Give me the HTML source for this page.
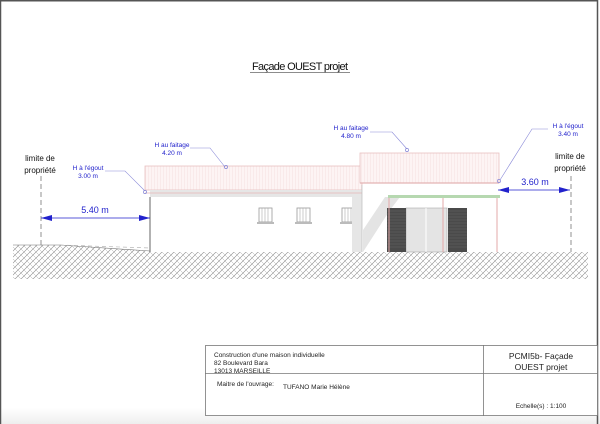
<!DOCTYPE html>
<html><head><meta charset="utf-8"><style>
html,body{margin:0;padding:0;background:#fff}
svg{display:block}
text{font-family:"Liberation Sans",sans-serif}
</style></head><body>
<svg width="600" height="424" viewBox="0 0 600 424" xmlns="http://www.w3.org/2000/svg">
<defs>
<pattern id="h" width="6" height="6" patternUnits="userSpaceOnUse">
<rect width="6" height="6" fill="#fff"/>
<path d="M0 6L6 0M-1 1L1 -1M5 7L7 5" stroke="#888" stroke-width="0.6"/>
<path d="M0 0L6 6M-1 5L1 7M5 -1L7 1" stroke="#aaa" stroke-width="0.5"/>
</pattern>
<pattern id="r" width="3" height="10" patternUnits="userSpaceOnUse">
<rect width="3" height="10" fill="#fdf4f4"/>
<path d="M1.5 0V10" stroke="#f6e0e0" stroke-width="0.5"/>
</pattern>
<linearGradient id="bg" x1="0" y1="0" x2="0" y2="1"><stop offset="0" stop-color="#fff"/><stop offset="1" stop-color="#eee"/></linearGradient>
</defs>
<rect x="0" y="408" width="600" height="16" fill="url(#bg)"/>
<path d="M0.5 424V0.8H597.5V424" fill="none" stroke="#555" stroke-width="1.5"/>

<text x="300" y="70" font-size="11" text-anchor="middle" fill="#111" textLength="96">Façade OUEST projet</text>
<line x1="250" y1="72.5" x2="350" y2="72.5" stroke="#666" stroke-width="0.7"/>

<!-- ground -->
<path d="M13 245H60L150 251L362 252H588V279H13Z" fill="url(#h)"/>
<path d="M13 245H60L150 251" fill="none" stroke="#777" stroke-width="0.6"/>
<path d="M60 245L150 248L362 250" fill="none" stroke="#aaa" stroke-width="0.6" stroke-dasharray="4 3"/>

<!-- left building -->
<rect x="150" y="193" width="212" height="59" fill="#fff"/>
<line x1="150" y1="197" x2="150" y2="252" stroke="#666" stroke-width="1"/>
<rect x="145" y="166" width="217" height="24" fill="url(#r)" stroke="#e8c0c0" stroke-width="0.8"/>
<rect x="150" y="190" width="212" height="7" fill="#e6e6e6"/>
<line x1="145" y1="193" x2="362" y2="193" stroke="#e4b4b4" stroke-width="0.7"/>
<g fill="#fff" stroke="#999" stroke-width="0.8">
<rect x="259" y="208" width="13" height="14"/><rect x="297" y="208" width="13" height="14"/><rect x="342" y="208" width="13" height="14"/>
</g>
<g stroke="#aaa" stroke-width="0.6">
<path d="M262 208V222M265 208V222M268 208V222M300 208V222M303 208V222M306 208V222M345 208V222M348 208V222M351 208V222"/>
</g>
<rect x="257" y="222" width="17" height="2" fill="#bbb"/><rect x="295" y="222" width="17" height="2" fill="#bbb"/><rect x="340" y="222" width="17" height="2" fill="#bbb"/>
<rect x="352" y="197" width="10" height="55" fill="#e6e6e6"/>

<!-- right building -->
<rect x="362" y="185" width="137" height="67" fill="#fff"/>
<polygon points="363,252 390,210 400,197 385,197 363,230" fill="#e4e4e4"/>
<rect x="360" y="153" width="139" height="30" fill="url(#r)" stroke="#e8c0c0" stroke-width="0.8"/>
<line x1="360" y1="183" x2="499" y2="183" stroke="#e4b4b4" stroke-width="1.2"/>
<line x1="362" y1="185" x2="362" y2="252" stroke="#bbb" stroke-width="0.7"/>
<rect x="388" y="195" width="112" height="3" fill="#b6d8b0"/>
<rect x="406" y="208" width="41" height="44" fill="#e4e4e4" stroke="#999" stroke-width="0.5"/>
<line x1="426" y1="208" x2="426" y2="252" stroke="#fff" stroke-width="1"/>
<rect x="387" y="208" width="19" height="44" fill="#4a4a4a"/>
<rect x="448" y="208" width="19" height="44" fill="#4a4a4a"/>
<g stroke="#666" stroke-width="0.5"><path d="M387 211H406M387 214H406M387 217H406M387 220H406M387 223H406M387 226H406M387 229H406M387 232H406M387 235H406M387 238H406M387 241H406M387 244H406M387 247H406M448 211H467M448 214H467M448 217H467M448 220H467M448 223H467M448 226H467M448 229H467M448 232H467M448 235H467M448 238H467M448 241H467M448 244H467M448 247H467"/></g>
<g stroke="#e3a8a8" stroke-width="1"><path d="M389 198V252M443 198V252M497 198V252"/></g>

<!-- property limits -->
<g stroke="#777" stroke-width="0.8" stroke-dasharray="5 3"><path d="M41 176V245M571 176V252"/></g>
<g font-size="8" text-anchor="middle" fill="#111">
<text x="40" y="161">limite de</text><text x="40" y="173">propriété</text>
<text x="570" y="159">limite de</text><text x="570" y="171">propriété</text>
</g>

<!-- dimensions -->
<g stroke="#2222cc" stroke-width="0.8" fill="none">
<path d="M41 218H150M498 190H570"/>
<path d="M105 171H125L145 191M190 148H210L225 167M370 132H392L407 149M548 129H532L500 180" stroke="#8a8ad8" stroke-width="0.6"/>
</g>
<g fill="#2222cc"><path d="M41 218L52 215V221Z"/><path d="M150 218L139 215V221Z"/><path d="M498 190L509 187V193Z"/><path d="M570 190L559 187V193Z"/></g>
<g fill="none" stroke="#8a8ad8" stroke-width="0.7"><circle cx="145" cy="192" r="1.6"/><circle cx="226" cy="167" r="1.6"/><circle cx="407" cy="150" r="1.6"/><circle cx="499" cy="181" r="1.6"/></g>
<g fill="#2222cc" text-anchor="middle">
<text x="95" y="213" font-size="9">5.40 m</text>
<text x="535" y="185" font-size="9">3.60 m</text>
<text x="88" y="170" font-size="6.5">H à l'égout</text><text x="88" y="178" font-size="6.5">3.00 m</text>
<text x="172" y="147" font-size="6.5">H au faitage</text><text x="172" y="155" font-size="6.5">4.20 m</text>
<text x="351" y="130" font-size="6.5">H au faitage</text><text x="351" y="138" font-size="6.5">4.80 m</text>
<text x="568" y="128" font-size="6.5">H à l'égout</text><text x="568" y="136" font-size="6.5">3.40 m</text>
</g>

<!-- title block -->
<rect x="205.5" y="345.5" width="392" height="70" fill="#fff" stroke="#777" stroke-width="0.8"/>
<line x1="483.5" y1="345" x2="483.5" y2="416" stroke="#777" stroke-width="0.8"/>
<line x1="205" y1="373.5" x2="598" y2="373.5" stroke="#777" stroke-width="0.8"/>
<g font-size="6.5" fill="#222">
<text x="214" y="357">Construction d'une maison individuelle</text>
<text x="214" y="365">82 Boulevard Bara</text>
<text x="214" y="373">13013 MARSEILLE</text>
<text x="217" y="386">Maitre de l'ouvrage:</text>
<text x="283" y="389">TUFANO Marie Hélène</text>
</g>
<g fill="#222" text-anchor="middle">
<text x="541" y="359" font-size="8.5">PCMI5b- Façade</text>
<text x="541" y="370" font-size="8.5">OUEST projet</text>
<text x="541" y="408" font-size="6.5">Echelle(s) : 1:100</text>
</g>
</svg>
</body></html>
